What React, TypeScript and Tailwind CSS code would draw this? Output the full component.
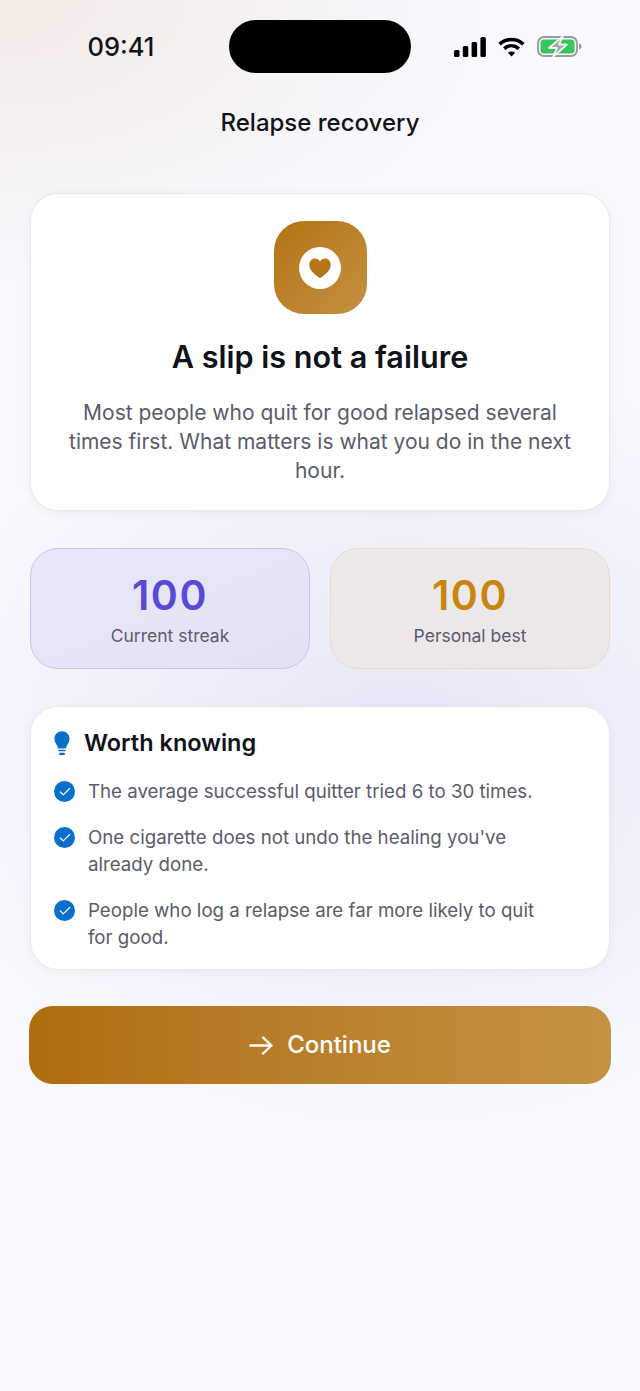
import { Check } from "lucide-react";

const facts = [
  "The average successful quitter tried 6 to 30 times.",
  "One cigarette does not undo the healing you've already done.",
  "People who log a relapse are far more likely to quit for good.",
];

function StatusIcons() {
  return (
    <div className="flex items-center gap-[12px]">
      {/* signal */}
      <svg width="32" height="20" viewBox="0 0 32 20" fill="#000">
        <rect x="0" y="13" width="5.500" height="7" rx="1.500" />
        <rect x="8.800" y="9" width="5.500" height="11" rx="1.500" />
        <rect x="17.600" y="5" width="5.500" height="15" rx="1.500" />
        <rect x="26.400" y="0" width="5.500" height="20" rx="1.500" />
      </svg>
      {/* wifi */}
      <svg width="27" height="20" viewBox="0 0 27 20" fill="none" stroke="#000" strokeWidth="3.600">
        <path d="M1.600 7.200C8.400.9 18.600.9 25.400 7.200" />
        <path d="M6.200 11.600C10.600 7.800 16.400 7.800 20.800 11.600" />
        <path d="M13.500 19.600 9.900 15.700C12 14.100 15 14.100 17.100 15.700Z" fill="#000" stroke="none" />
      </svg>
      {/* battery */}
      <svg width="45" height="21" viewBox="0 0 45 21" fill="none">
        <rect x="1" y="1" width="39" height="19" rx="6" stroke="#9a9a9a" strokeWidth="1.800" />
        <rect x="3.500" y="3.500" width="34" height="14" rx="3.500" fill="#34c759" />
        <path d="M42 7.500v6c1.600-.4 2.600-1.600 2.600-3S43.600 7.900 42 7.500Z" fill="#9a9a9a" />
        <path d="M26 0 12 12h8l-4 9 14-12.500h-8z" fill="#a4aaa6" stroke="#f4f4f8" strokeWidth="1.800" strokeLinejoin="round" />
      </svg>
    </div>
  );
}

export default function App() {
  return (
    <div className="min-h-[1391px] bg-[#f8f8fe] bg-[radial-gradient(ellipse_480px_280px_at_0px_0px,#f3ebe5,transparent),radial-gradient(ellipse_480px_380px_at_400px_740px,#e7e6f7,transparent)] font-['Inter','Liberation_Sans',sans-serif] text-[#11131a]">
      {/* status bar */}
      <div className="flex h-[74px] items-end pb-[1px]">
        <div className="flex w-[229px] justify-center pb-[11px] pl-[13px] text-[25.500px] font-medium leading-[30px]">
          09:41
        </div>
        <div className="h-[53px] w-[182px] rounded-[27px] bg-black" />
        <div className="flex flex-1 pb-[16px] pl-[43px]">
          <StatusIcons />
        </div>
      </div>

      <h1 className="mt-[33px] text-center text-[24px] font-medium leading-[32px]">Relapse recovery</h1>

      <div className="mt-[54px] flex flex-col px-[30px]">
        {/* intro card */}
        <div className="flex h-[318px] flex-col items-center rounded-[28px] border border-[#e8e8ee] bg-white px-[32px] pt-[27px] shadow-[0_2px_10px_rgba(60,60,90,0.06)]">
          <div className="flex h-[93px] w-[93px] items-center justify-center rounded-[30px] bg-gradient-to-br from-[#b5730f] to-[#c4903f]">
            <div className="flex h-[42px] w-[42px] items-center justify-center rounded-full bg-white">
              <svg width="22" height="20" viewBox="0 0 22 20" fill="#b5761a">
                <path d="M11 19.800c-.5 0-1-.2-1.500-.6C4 15.200.3 11.600.3 6.700.3 3.200 2.800.5 6 .5c2.100 0 3.900 1 5 2.900C12.100 1.500 13.900.5 16 .5c3.200 0 5.700 2.700 5.700 6.200 0 4.900-3.700 8.500-9.200 12.500-.5.400-1 .6-1.500.6Z" />
              </svg>
            </div>
          </div>
          <h2 className="mt-[23px] text-[30.600px] font-semibold leading-[40px]">A slip is not a failure</h2>
          <p className="mt-[21px] text-center text-[21px] leading-[29px] text-[#5a5b6b]">
            Most people who quit for good relapsed several times first. What matters is what you do in the next hour.
          </p>
        </div>

        {/* stats */}
        <div className="mt-[37px] grid grid-cols-2 gap-[20px]">
          <div className="flex h-[121px] flex-col items-center rounded-[28px] border-[1.500px] border-[#c5c4ef] bg-gradient-to-br from-[#e9e8f8] to-[#e3e2f4] pt-[21px]">
            <div className="text-[41px] font-semibold leading-[50px] tracking-[1.500px] text-[#5a49d9]">100</div>
            <div className="mt-[4px] text-[17.500px] leading-[24px] text-[#5a5b6b]">Current streak</div>
          </div>
          <div className="flex h-[121px] flex-col items-center rounded-[28px] border-[1.500px] border-[#edd9c0] bg-gradient-to-br from-[#eeeaea] to-[#ebe6ea] pt-[21px]">
            <div className="text-[41px] font-semibold leading-[50px] tracking-[1.500px] text-[#c8860f]">100</div>
            <div className="mt-[4px] text-[17.500px] leading-[24px] text-[#5a5b6b]">Personal best</div>
          </div>
        </div>

        {/* facts */}
        <div className="mt-[37px] flex h-[264px] flex-col rounded-[28px] border border-[#e8e8ee] bg-white pl-[23px] pr-[66px] pt-[20px] shadow-[0_2px_10px_rgba(60,60,90,0.06)]">
          <div className="flex items-center gap-[14px]">
            <svg width="16" height="25" viewBox="0 0 16 25" fill="#0a6ecb">
              <path d="M8 .3C3.700.3.500 3.500.5 7.800c0 2.900 1.200 4.500 2.200 6.100.7 1.100 1.200 2.200 1.500 3.600h7.600c.3-1.400.8-2.500 1.500-3.600 1-1.600 2.200-3.200 2.200-6.100C15.500 3.500 12.300.3 8 .3Z" />
              <rect x="4.200" y="18.800" width="7.600" height="1.500" rx=".7" />
              <rect x="5" y="21.700" width="6" height="2.300" rx="1.100" />
            </svg>
            <div className="text-[23.500px] font-semibold leading-[32px]">Worth knowing</div>
          </div>
          <ul className="mt-[19px] flex flex-col gap-[19px]">
            {facts.map((fact) => (
              <li key={fact} className="flex items-start gap-[13px]">
                <div className="mt-[3px] flex h-[21px] w-[21px] shrink-0 items-center justify-center rounded-full bg-[#0a6ecb]">
                  <Check size={14} color="#fff" strokeWidth={2} />
                </div>
                <div className="text-[18.700px] leading-[27px] text-[#5a5b6b]">{fact}</div>
              </li>
            ))}
          </ul>
        </div>

        {/* continue */}
        <button className="-mx-[1px] mt-[36px] flex h-[78px] items-center justify-center gap-[14px] rounded-[24px] bg-gradient-to-r from-[#b06d0a] to-[#c49243] text-[24px] font-medium text-white">
          <svg width="24" height="19" viewBox="0 0 24 19" fill="none" stroke="#fff" strokeWidth="2.400" strokeLinecap="round" strokeLinejoin="round">
            <path d="M1.500 9.500H22.500M14 1.500l8.500 8-8.500 8" />
          </svg>
          Continue
        </button>
      </div>
    </div>
  );
}
